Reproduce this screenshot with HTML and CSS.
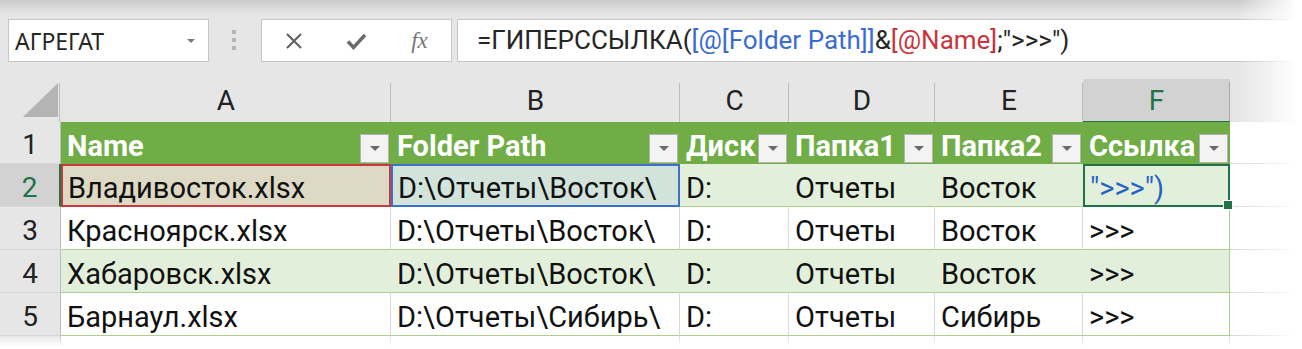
FILE: index.html
```html
<!DOCTYPE html>
<html lang="ru">
  <head>
    <meta charset="UTF-8" />
    <title>Excel — ГИПЕРССЫЛКА</title>
    <link rel="stylesheet" href="styles.css">
  </head>
  <body>
    <div class="toolbar">
      <div class="namebox"><span>АГРЕГАТ</span><span class="caret"></span></div>
      <div class="grip"><i></i><i></i><i></i></div>
      <div class="fbuttons">
        <span class="fbtn">
          <svg width="18" height="18" viewBox="0 0 18 18"><path d="M2 2L16 16M16 2L2 16" stroke="#5e5e5e" stroke-width="2" fill="none"/></svg>
        </span>
        <span class="fbtn">
          <svg width="21" height="18" viewBox="0 0 21 18"><path d="M2 9.5l5.5 6L19 3" stroke="#6a6a6a" stroke-width="3.4" fill="none"/></svg>
        </span>
        <span class="fbtn fx">fx</span>
      </div>
      <div class="formula">=ГИПЕРССЫЛКА(<span class="ref-blue">[@[Folder Path]]</span>&amp;<span class="ref-red">[@Name]</span>;"&gt;&gt;&gt;")</div>
    </div>

    <div class="sheet">
      <div class="row colheads">
        <div class="corner">
          <svg width="61" height="43" viewBox="0 0 61 43"><polygon points="23,38 58,38 58,4" fill="#b4b4b4"/></svg>
        </div>
        <div class="colhead">A</div>
        <div class="colhead">B</div>
        <div class="colhead">C</div>
        <div class="colhead">D</div>
        <div class="colhead">E</div>
        <div class="colhead active">F</div>
        <div class="colhead"></div>
      </div>

      <div class="row thead">
        <div class="rowhead">1</div>
        <div class="cell th"><span>Name</span><span class="filter"></span></div>
        <div class="cell th"><span>Folder Path</span><span class="filter"></span></div>
        <div class="cell th"><span>Диск</span><span class="filter"></span></div>
        <div class="cell th"><span>Папка1</span><span class="filter"></span></div>
        <div class="cell th"><span>Папка2</span><span class="filter"></span></div>
        <div class="cell th"><span>Ссылка</span><span class="filter"></span></div>
        <div class="cell out"></div>
      </div>

      <div class="row band">
        <div class="rowhead active">2</div>
        <div class="cell ref-red-cell">Владивосток.xlsx</div>
        <div class="cell ref-blue-cell">D:\Отчеты\Восток\</div>
        <div class="cell">D:</div>
        <div class="cell">Отчеты</div>
        <div class="cell">Восток</div>
        <div class="cell last selected"><span class="editing">"&gt;&gt;&gt;")</span></div>
        <div class="cell out"></div>
      </div>

      <div class="row">
        <div class="rowhead">3</div>
        <div class="cell">Красноярск.xlsx</div>
        <div class="cell">D:\Отчеты\Восток\</div>
        <div class="cell">D:</div>
        <div class="cell">Отчеты</div>
        <div class="cell">Восток</div>
        <div class="cell last">&gt;&gt;&gt;</div>
        <div class="cell out"></div>
      </div>

      <div class="row band">
        <div class="rowhead">4</div>
        <div class="cell">Хабаровск.xlsx</div>
        <div class="cell">D:\Отчеты\Восток\</div>
        <div class="cell">D:</div>
        <div class="cell">Отчеты</div>
        <div class="cell">Восток</div>
        <div class="cell last">&gt;&gt;&gt;</div>
        <div class="cell out"></div>
      </div>

      <div class="row">
        <div class="rowhead">5</div>
        <div class="cell">Барнаул.xlsx</div>
        <div class="cell">D:\Отчеты\Сибирь\</div>
        <div class="cell">D:</div>
        <div class="cell">Отчеты</div>
        <div class="cell">Сибирь</div>
        <div class="cell last">&gt;&gt;&gt;</div>
        <div class="cell out"></div>
      </div>

      <div class="row blank">
        <div class="rowhead"></div>
        <div class="cell"></div>
        <div class="cell"></div>
        <div class="cell"></div>
        <div class="cell"></div>
        <div class="cell"></div>
        <div class="cell"></div>
        <div class="cell out"></div>
      </div>
    </div>

    <div class="fade-right"></div>
    <div class="fade-bottom"></div>
  </body>
</html>
```

FILE: styles.css
```css
* {
  box-sizing: border-box;
}
body {
  margin: 0;
  width: 1302px;
  height: 349px;
  overflow: hidden;
  position: relative;
  background: #fff;
  font-family: Roboto, "Noto Sans", sans-serif;
  color: #111;
}

/* formula bar */
.toolbar {
  display: flex;
  align-items: flex-start;
  height: 79px;
  padding: 19px 0 0 8px;
  background: linear-gradient(#cbcbcb, #e6e6e6 14px);
}
.namebox {
  display: flex;
  align-items: center;
  justify-content: space-between;
  width: 201px;
  height: 43px;
  padding: 0 13px 0 6px;
  background: #fff;
  border: 1px solid #c6c6c6;
  font-family: "Noto Sans", sans-serif;
  font-size: 23px;
  color: #262626;
}
.caret {
  border-left: 4px solid transparent;
  border-right: 4px solid transparent;
  border-top: 4px solid #7a7a7a;
}
.grip {
  display: flex;
  flex-direction: column;
  gap: 4px;
  margin: 11px 0 0 23px;
}
.grip i {
  width: 4px;
  height: 4px;
  background: #b4b4b4;
}
.fbuttons {
  display: flex;
  width: 191px;
  height: 43px;
  margin-left: 25px;
  background: #fff;
  border: 1px solid #c6c6c6;
}
.fbtn {
  flex: 1;
  display: flex;
  align-items: center;
  justify-content: center;
}
.fx {
  font-family: "Liberation Serif", serif;
  font-style: italic;
  font-size: 23px;
  color: #777;
}
.formula {
  flex: 1;
  height: 43px;
  margin-left: 5px;
  padding-left: 19px;
  background: #fff;
  border: 1px solid #c6c6c6;
  border-right: none;
  font-size: 26px;
  line-height: 40px;
  color: #262626;
  white-space: nowrap;
}
.ref-blue {
  color: #3a6cd2;
}
.ref-red {
  color: #c8353c;
}

/* grid */
.row {
  display: grid;
  grid-template-columns: 61px 330px 289px 109px 146px 148px 147px 1fr;
  height: 43px;
}
.row.thead {
  height: 42px;
}
.row.blank {
  height: 13px;
}
.corner {
  background: #e6e6e6;
  border-right: 1px solid transparent;
  border-bottom: 1px solid #bdbdbd;
  background-image: linear-gradient(#bdbdbd, #bdbdbd);
  background-size: 1px 39px;
  background-position: right bottom;
  background-repeat: no-repeat;
}
.corner svg {
  display: block;
}
.colhead {
  display: flex;
  align-items: center;
  justify-content: center;
  font-size: 28px;
  color: #222;
  background-color: #e6e6e6;
  background-image: linear-gradient(#bdbdbd, #bdbdbd);
  background-size: 1px 39px;
  background-position: right bottom;
  background-repeat: no-repeat;
  border-bottom: 1px solid #bdbdbd;
}
.colhead.active {
  background-color: #d2d2d2;
  background-image: linear-gradient(#a8a8a8, #a8a8a8);
  color: #217346;
  border-bottom: 2px solid #217346;
}
.rowhead {
  display: flex;
  align-items: flex-end;
  justify-content: center;
  padding-bottom: 1px;
  font-size: 28px;
  line-height: 34px;
  color: #222;
  background: #e6e6e6;
  border-right: 1px solid #bdbdbd;
  border-bottom: 1px solid #d6d6d6;
}
.rowhead.active {
  background: #d2d2d2;
  color: #217346;
  border-right: 2px solid #217346;
}

.cell {
  display: flex;
  align-items: flex-end;
  padding: 0 0 1px 6px;
  font-size: 29px;
  line-height: 34px;
  white-space: nowrap;
  overflow: hidden;
  background: #fff;
  border-right: 1px solid #d9d9d9;
  border-bottom: 1px solid #a9d08e;
}
.band .cell {
  background: #e2efda;
  border-right-color: #e2efda;
}
.cell.last {
  border-right-color: #a9d08e;
}
.cell.out,
.band .cell.out {
  background: #fff;
  border-right: none;
  border-bottom-color: #dadada;
}
.blank .cell {
  border-bottom: none;
}

/* table header */
.cell.th {
  justify-content: space-between;
  padding-right: 2px;
  background: #70ad47;
  color: #fff;
  font-weight: 700;
  border: none;
}
.filter {
  display: flex;
  align-items: center;
  justify-content: center;
  flex: none;
  width: 29px;
  height: 29px;
  background: #f3f3f3;
  border: 1px solid #b3b3b3;
}
.filter::after {
  content: "";
  border-left: 5px solid transparent;
  border-right: 5px solid transparent;
  border-top: 5px solid #6a6a6a;
}

/* formula references and active cell */
.band .cell.ref-red-cell {
  background: #ddd9c4;
  border: 2px solid #c8383d;
  padding-left: 5px;
  padding-bottom: 0;
}
.band .cell.ref-blue-cell {
  background: #d2e3db;
  border: 2px solid #3a72c8;
  padding-left: 5px;
  padding-bottom: 0;
}
.band .cell.selected {
  position: relative;
  z-index: 1;
  overflow: visible;
  border: 2px solid #217346;
  padding-left: 5px;
  padding-bottom: 0;
}
.selected::after {
  content: "";
  position: absolute;
  right: -5px;
  bottom: -5px;
  width: 8px;
  height: 8px;
  background: #217346;
  border: 1px solid #fff;
}
.editing {
  color: #2562c6;
}

/* paper edge */
.fade-right {
  position: absolute;
  top: 0;
  right: 0;
  width: 64px;
  height: 100%;
  background: linear-gradient(to right, rgba(255, 255, 255, 0), #fff 92%);
}
.fade-bottom {
  position: absolute;
  left: 0;
  bottom: 0;
  width: 100%;
  height: 12px;
  background: linear-gradient(rgba(255, 255, 255, 0.2), #fff 80%);
}
```
